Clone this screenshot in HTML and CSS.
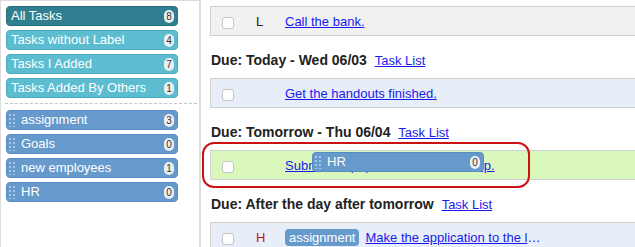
FILE: index.html
```html
<!DOCTYPE html>
<html lang="en">
<head>
    <meta charset="UTF-8">
    <meta name="viewport" content="width=device-width, initial-scale=1.0">
    <title>Tasks</title>
    <link rel="stylesheet" href="styles.css">
</head>
<body>

    <div class="sidebar">
        <div class="filter current"><span class="name">All Tasks</span><span class="count">8</span></div>
        <div class="filter"><span class="name">Tasks without Label</span><span class="count">4</span></div>
        <div class="filter"><span class="name">Tasks I Added</span><span class="count">7</span></div>
        <div class="filter"><span class="name">Tasks Added By Others</span><span class="count">1</span></div>

        <div class="divider"></div>

        <div class="filter label"><span class="grip"></span><span class="name">assignment</span><span class="count">3</span></div>
        <div class="filter label"><span class="grip"></span><span class="name">Goals</span><span class="count">0</span></div>
        <div class="filter label"><span class="grip"></span><span class="name">new employees</span><span class="count">1</span></div>
        <div class="filter label"><span class="grip"></span><span class="name">HR</span><span class="count">0</span></div>
    </div>

    <div class="main">
        <div class="task overdue">
            <span class="check"><span class="box"></span></span>
            <span class="prio">L</span>
            <a href="#" class="title">Call the bank.</a>
        </div>

        <div class="due">Due: Today - Wed 06/03 <a href="#">Task List</a></div>
        <div class="task">
            <span class="check"><span class="box"></span></span>
            <span class="prio"></span>
            <a href="#" class="title">Get the handouts finished.</a>
        </div>

        <div class="due">Due: Tomorrow - Thu 06/04 <a href="#">Task List</a></div>
        <div class="task drop-target">
            <span class="check"><span class="box"></span></span>
            <span class="prio"></span>
            <a href="#" class="title">Submit the papers for the internship.</a>
        </div>

        <div class="due">Due: After the day after tomorrow <a href="#">Task List</a></div>
        <div class="task">
            <span class="check"><span class="box"></span></span>
            <span class="prio high">H</span>
            <span class="tag">assignment</span>
            <a href="#" class="title short">Make the application to the local office.</a>
        </div>

        <!-- label being dragged onto a task -->
        <div class="highlight"></div>
        <div class="filter label dragging"><span class="grip"></span><span class="name">HR</span><span class="count">0</span></div>
    </div>

</body>
</html>
```

FILE: styles.css
```css
* {
    box-sizing: border-box;
}

body {
    margin: 0;
    padding: 0;
    display: flex;
    height: 100vh;
    overflow: hidden;
    font-family: "Liberation Sans", Arial, sans-serif;
    font-size: 13px;
    color: #222;
    background: #fff;
}

a {
    color: #1a1aee;
}

/* left column */
.sidebar {
    width: 201px;
    flex-shrink: 0;
    border: 1px solid #dcdcdc;
    border-bottom: none;
    border-right: 2px solid #dcdcdc;
    padding: 5px 0 0 5px;
}

.filter {
    display: flex;
    align-items: center;
    width: 172px;
    height: 20px;
    margin-bottom: 4px;
    padding: 0 3px 0 4px;
    border: 1px solid #49aabd;
    border-radius: 4px;
    background: #5cbcd0;
    color: #fff;
    line-height: 18px;
}

.filter.current {
    background: #2f7f90;
    border-color: #236c7b;
}

.filter.label {
    background: #6699cc;
    border-color: #5a8cc0;
    padding-left: 2px;
}

.filter .name {
    flex: 1;
    white-space: nowrap;
}

.grip {
    width: 6px;
    height: 14px;
    margin-right: 6px;
    background-image: radial-gradient(circle, rgba(255,255,255,0.45) 1px, transparent 1.2px);
    background-size: 4px 4px;
    background-position: -1px 0;
}

.count {
    min-width: 10px;
    height: 13px;
    padding: 0 2px;
    border-radius: 6px;
    background: #e9eff2;
    color: #333;
    font-size: 10px;
    line-height: 13px;
    text-align: center;
}

.divider {
    width: 192px;
    margin: 5px 0 6px -1px;
    border-top: 1px dashed #c4c4c4;
}

/* task list */
.main {
    position: relative;
    flex: 1;
    padding: 6px 0 0 9px;
}

.task {
    display: flex;
    align-items: center;
    height: 30px;
    border: 1px solid #cfcfcf;
    border-right: none;
    background: #e8eef7;
    white-space: nowrap;
}

.task.overdue {
    background: #f1f1f1;
}

.task.drop-target {
    background: #daf7bc;
}

.check {
    width: 45px;
    padding: 3px 0 0 11px;
}

.box {
    display: block;
    width: 12px;
    height: 12px;
    border: 1px solid #c4c4c4;
    border-radius: 3px;
    background: #fff;
}

.prio {
    width: 29px;
}

.prio.high {
    color: #cc1111;
}

.tag {
    height: 17px;
    padding: 0 4px;
    margin-right: 6px;
    border-radius: 4px;
    background: #6699cc;
    color: #fff;
    line-height: 17px;
}

.title.short {
    display: inline-block;
    max-width: 175px;
    overflow: hidden;
    text-overflow: ellipsis;
}

.due {
    margin: 16px 0 9px 1px;
    font-size: 14px;
    font-weight: bold;
    line-height: 16px;
}

.due a {
    margin-left: 4px;
    font-size: 13px;
    font-weight: normal;
}

/* drag feedback */
.highlight {
    position: absolute;
    left: 1px;
    top: 142px;
    width: 328px;
    height: 46px;
    border: 2px solid #cc1111;
    border-radius: 12px;
}

.filter.dragging {
    position: absolute;
    left: 111px;
    top: 152px;
    margin: 0;
}
```
